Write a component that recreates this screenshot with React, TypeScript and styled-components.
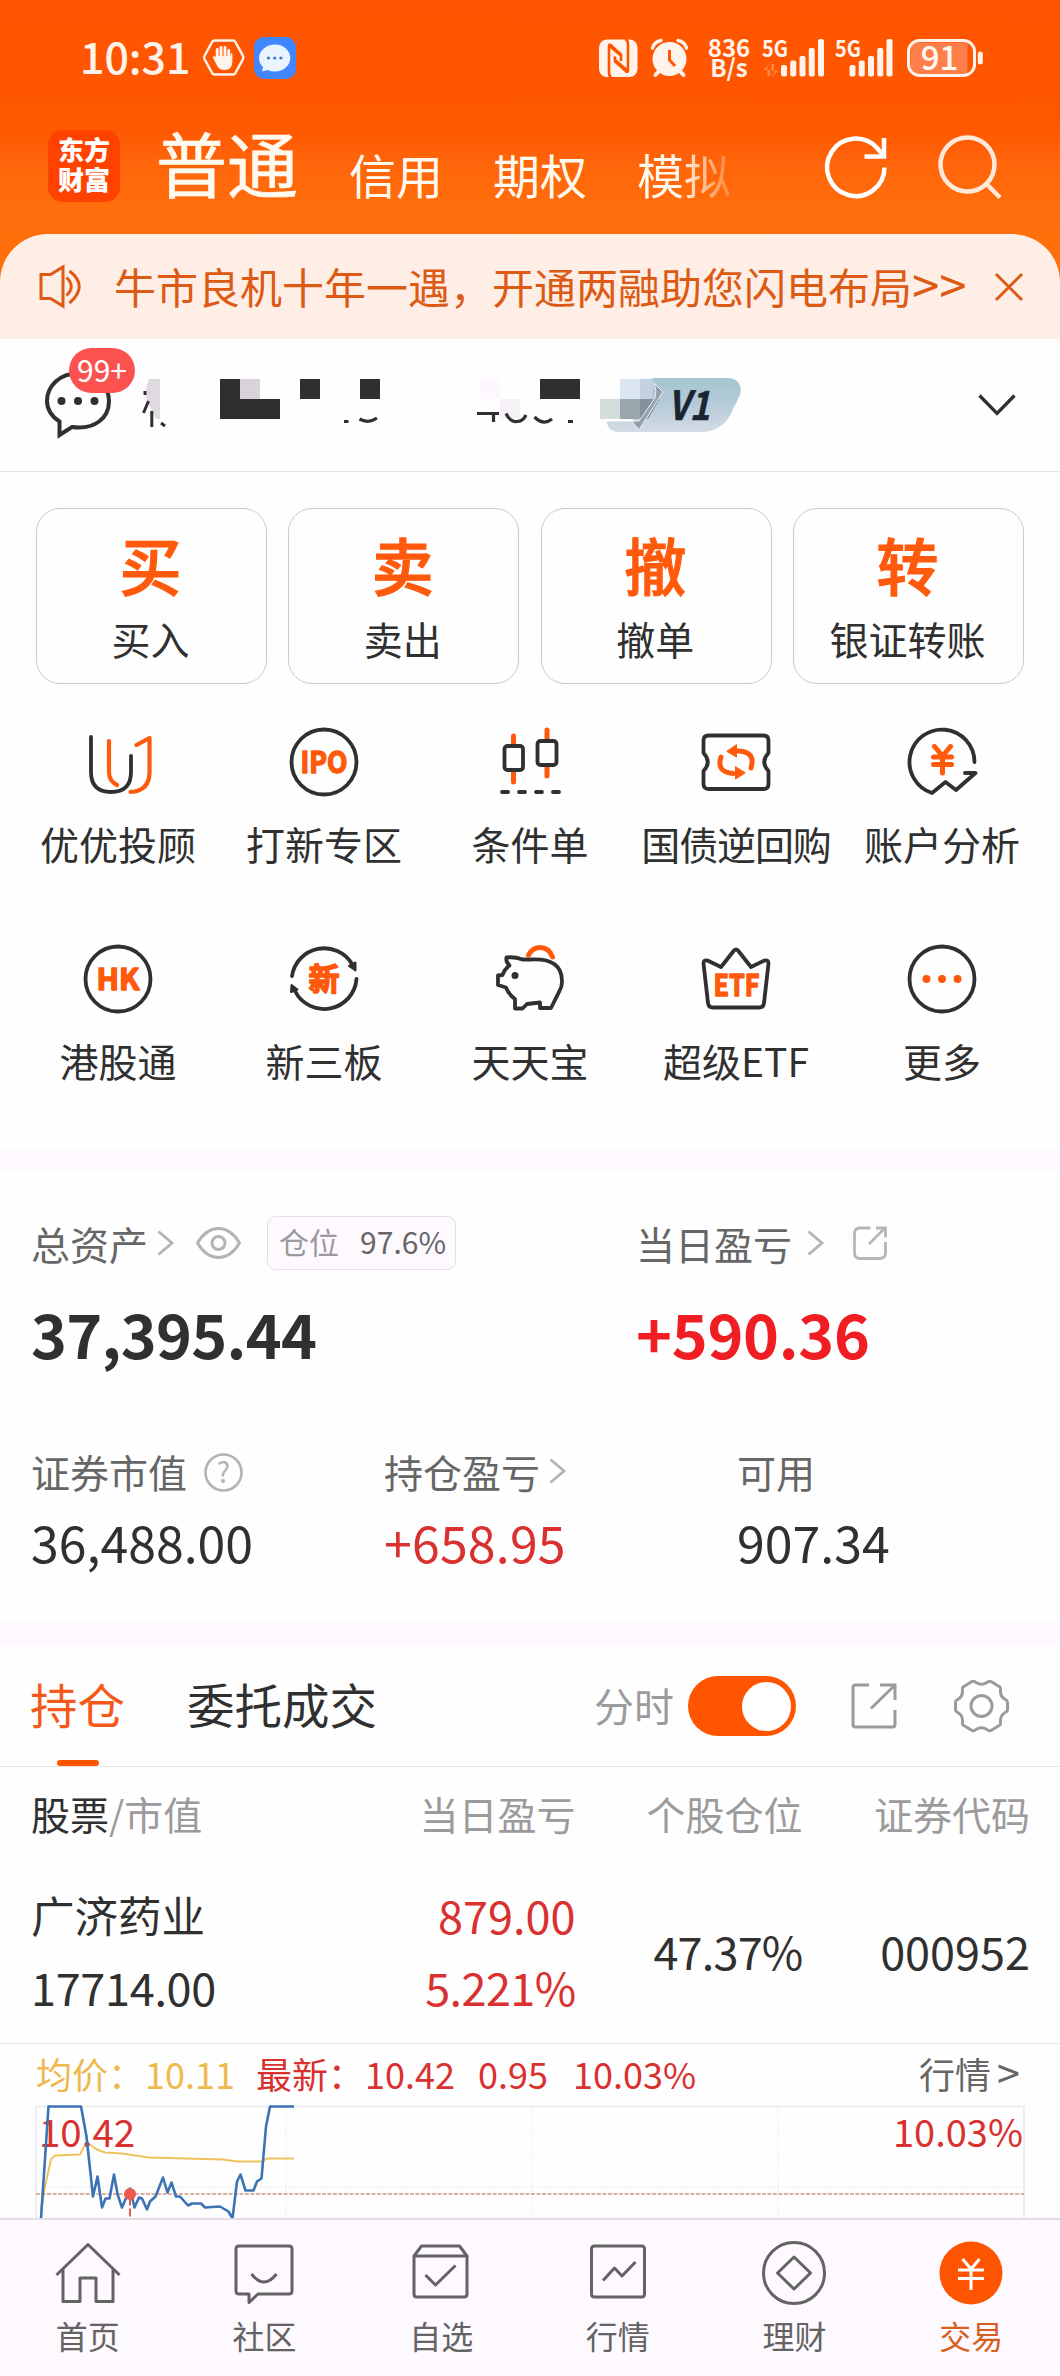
import React from 'react';
import styled, { createGlobalStyle } from 'styled-components';

const ORANGE = '#ff5500';
const INK = '#303030';
const GREY = '#666666';
const LIGHT = '#9c9a9c';
const RED = '#d93030';
const BAND = '#fdf9fe';

const GlobalStyle = createGlobalStyle`
  * { box-sizing: border-box; }
  html, body { margin: 0; padding: 0; background: #fefefe; }
  body {
    font-family: "Noto Sans CJK SC", "Noto Sans", sans-serif;
    color: ${INK};
    width: 1060px;
    overflow: hidden;
  }
  svg { display: block; flex: none; overflow: visible; }
`;

const Screen = styled.div`
  width: 1060px;
  height: 2376px;
  display: flex;
  flex-direction: column;
  overflow: hidden;
  background: #fefefe;
`;

const Text = styled.span<{ $size: number; $color?: string; $weight?: number; $ml?: number; $track?: number }>`
  font-size: ${(p) => p.$size}px;
  line-height: 1.2;
  color: ${(p) => p.$color ?? INK};
  font-weight: ${(p) => p.$weight ?? 400};
  margin-left: ${(p) => p.$ml ?? 0}px;
  letter-spacing: ${(p) => p.$track ?? 0}px;
  white-space: nowrap;
`;

const Push = styled.div<{ $ml: number }>`
  flex: none;
  margin-left: ${(p) => p.$ml}px;
`;

/* ---------- header ---------- */

const Header = styled.header`
  height: 339px;
  background: linear-gradient(180deg, #ff5500 0, #ff5600 122px, #ff640a 160px, #ff6d0c 205px, #ff6f0c 234px);
`;

const StatusBar = styled.div`
  height: 116px;
  display: flex;
  align-items: center;
  padding-left: 80px;
`;

const Clock = styled.span`
  width: 123px;
  font-size: 43px;
  line-height: 50px;
  padding-bottom: 7px;
  font-weight: 500;
  letter-spacing: -0.1px;
  color: #fff3ec;
`;

const Speed = styled.div`
  margin-left: 17px;
  width: 46px;
  display: flex;
  flex-direction: column;
  align-items: center;
  font-size: 24px;
  line-height: 20px;
  font-weight: 700;
  color: #fff3ec;
  padding-bottom: 3px;
`;

const NavBar = styled.div`
  height: 118px;
  padding: 0 58px 18px 48px;
  display: flex;
  align-items: center;
`;

const Logo = styled.div`
  width: 72px;
  height: 72px;
  flex: none;
  border-radius: 15px;
  background: #ff4200;
  color: #fff;
  font-size: 26px;
  line-height: 30px;
  font-weight: 900;
  text-align: center;
  padding-top: 4px;
`;

const NavTitle = styled.span`
  margin-left: 36px;
  padding-bottom: 10px;
  font-size: 71px;
  line-height: 80px;
  color: #fffaf0;
  -webkit-text-stroke: 0.7px #fffaf0;
  white-space: nowrap;
`;

const NavItem = styled.span<{ $ml: number; $fade?: boolean }>`
  font-size: 47px;
  line-height: 60px;
  margin-left: ${(p) => p.$ml}px;
  padding-top: 15px;
  color: #fffaf0;
  white-space: nowrap;
  ${(p) =>
    p.$fade
      ? `background: linear-gradient(90deg, #fffaf0 45%, rgba(255,250,240,0.1) 105%);
         -webkit-background-clip: text; background-clip: text; color: transparent;`
      : ''}
`;

const NavIcons = styled.div`
  margin-left: auto;
  display: flex;
  align-items: center;
  gap: 51px;
`;

const Notice = styled.div`
  height: 105px;
  border-radius: 48px 48px 0 0;
  background: #ffeee6;
  display: flex;
  align-items: center;
  padding: 0 37px 0 39px;
  justify-content: space-between;
`;

const NoticeText = styled.span`
  font-size: 42px;
  line-height: 60px;
  width: 852px;
  margin-left: 3px;
  padding-bottom: 2px;
  color: #dd5a14;
  white-space: nowrap;
`;

const Chevrons = styled.span`
  font-size: 49px;
  line-height: 40px;
`;

/* ---------- account ---------- */

const Account = styled.section`
  height: 133px;
  border-bottom: 1px solid #e4e4e4;
  display: flex;
  align-items: center;
  padding: 0 44px;
`;

const Messages = styled.div`
  position: relative;
  width: 68px;
  height: 68px;
`;

const Count = styled.span`
  position: absolute;
  left: 25px;
  top: -23px;
  width: 66px;
  height: 45px;
  border-radius: 23px;
  background: #fb5250;
  color: #fff;
  font-size: 30px;
  line-height: 42px;
  text-align: center;
`;

/* ---------- actions ---------- */

const Cards = styled.div`
  display: grid;
  grid-template-columns: repeat(4, 1fr);
  gap: 21.6px;
  padding: 36px 36px 0;
`;

const Card = styled.button`
  height: 176px;
  border: 1px solid #cbcbcb;
  border-radius: 24px;
  background: #fefefe;
  font-family: inherit;
  padding: 18px 2px 0 0;
  display: flex;
  flex-direction: column;
  align-items: center;
`;

const CardGlyph = styled.span`
  font-size: 62px;
  line-height: 74px;
  font-weight: 500;
  color: #ff5a0c;
  -webkit-text-stroke: 1.2px #ff5a0c;
`;

const CardLabel = styled.span`
  font-size: 39px;
  line-height: 74px;
  color: ${INK};
`;

const Shortcuts = styled.div`
  display: grid;
  grid-template-columns: repeat(5, 206px);
  grid-auto-rows: 217px;
  padding: 43px 15px 0;
  height: 464px;
`;

const Shortcut = styled.div`
  display: flex;
  flex-direction: column;
  align-items: center;
  gap: 23px;
`;

const Band = styled.div<{ $h: number }>`
  height: ${(p) => p.$h}px;
  flex: none;
  background: ${BAND};
`;

/* ---------- assets ---------- */

const Assets = styled.section`
  height: 449px;
  padding: 45px 0 0 31px;
`;

const Totals = styled.div`
  display: grid;
  grid-template-columns: 605px 1fr;
  height: 151px;
`;

const Details = styled.div`
  display: grid;
  grid-template-columns: 353px 353px 1fr;
  margin-top: 78px;
`;

const Line = styled.div<{ $h: number; $mt?: number }>`
  height: ${(p) => p.$h}px;
  margin-top: ${(p) => p.$mt ?? 0}px;
  display: flex;
  align-items: center;
`;

const Position = styled.div`
  margin-left: 26px;
  width: 189px;
  height: 54px;
  border: 1px solid #e3dfe4;
  border-radius: 9px;
  background: ${BAND};
  display: flex;
  align-items: center;
  padding: 0 9px 4px 11px;
  justify-content: space-between;
`;

/* ---------- holdings ---------- */

const Tabs = styled.div`
  height: 121px;
  border-bottom: 1px solid #e4e4e4;
  display: flex;
  align-items: center;
  padding-left: 30px;
`;

const Tab = styled.div<{ $active?: boolean }>`
  position: relative;
  height: 120px;
  display: flex;
  align-items: center;
  padding-bottom: 6px;
  font-size: 47.5px;
  color: ${(p) => (p.$active ? '#f5591a' : INK)};
  margin-right: 62px;
  ${(p) =>
    p.$active
      ? `&::after { content: ''; position: absolute; left: 27px; bottom: 0; width: 42px; height: 6px; border-radius: 3px; background: ${ORANGE}; }`
      : ''}
`;

const ToggleLabel = styled.span`
  margin-left: 155px;
  padding-bottom: 3px;
  font-size: 40px;
  line-height: 48px;
  color: ${LIGHT};
`;

const Toggle = styled.div`
  width: 108px;
  height: 60px;
  border-radius: 30px;
  background: ${ORANGE};
  margin-left: 14px;
  display: flex;
  align-items: center;
  justify-content: flex-end;
  padding-right: 5px;
`;

const Knob = styled.div`
  width: 49px;
  height: 49px;
  border-radius: 50%;
  background: #fff;
`;

const HoldingGrid = styled.div<{ $h: number }>`
  height: ${(p) => p.$h}px;
  display: grid;
  grid-template-columns: 300px 244.5px 227px 227.5px;
  align-items: center;
  padding-left: 31px;
`;

const HoldingCell = styled.div<{ $right?: boolean }>`
  display: flex;
  flex-direction: column;
  align-items: ${(p) => (p.$right ? 'flex-end' : 'flex-start')};
`;

const Stack = styled.div`
  height: 72px;
  display: flex;
  align-items: center;
`;

const QuoteRow = styled.div`
  height: 60px;
  border-top: 1px solid #e8e8e8;
  display: flex;
  align-items: center;
  padding: 0 36px 2px;
  flex: none;
`;

const QuoteText = styled.span<{ $w: number; $color: string }>`
  width: ${(p) => p.$w}px;
  color: ${(p) => p.$color};
  font-size: 36px;
  line-height: 50px;
  white-space: nowrap;
`;

const More = styled.span`
  font-size: 41px;
  line-height: 40px;
  margin-left: -2px;
`;

const ChartBox = styled.div`
  height: 115px;
  overflow: hidden;
  flex: none;
`;

/* ---------- bottom bar ---------- */

const BottomBar = styled.nav`
  height: 157px;
  flex: none;
  border-top: 2px solid #e2dfe3;
  background: ${BAND};
  display: grid;
  grid-template-columns: repeat(6, 1fr);
  padding-top: 20px;
`;

const BottomItem = styled.div`
  display: flex;
  flex-direction: column;
  align-items: center;
  gap: 10px;
  padding-right: 1px;
`;

/* ---------- icons ---------- */

const HandIcon = () => (
  <svg width="42" height="40" viewBox="203 38 42 40" fill="none">
    <path d="M214.500 40.500h18.500q1.500 0 2.300 1.300l7.700 14q.8 1.700 0 3.400l-7.700 14q-.8 1.300-2.300 1.300h-18.500q-1.500 0-2.300-1.300l-7.700-14q-.8-1.700 0-3.400l7.700-14q.8-1.300 2.300-1.300z" stroke="#fff3ec" strokeWidth="2.400" />
    <path d="M217.200 60V49.500M221 58V47.500M225 58V47.500M228.800 60V50.500" stroke="#fff3ec" strokeWidth="2.900" strokeLinecap="round" />
    <path d="M215.800 56h14.400l1-2.500q1.300-1 1.200 1V61q0 9-8 9-5 0-7.500-4.500l-4-8q0-2 2.500-1l2 2.500z" fill="#fff3ec" />
  </svg>
);

const ChatAppIcon = () => (
  <svg width="42" height="42" viewBox="254 36.500 42 42">
    <rect x="254" y="36.500" width="42" height="42" rx="10" fill="#3f86ff" />
    <path d="M275 44c8.500 0 15.300 6 15.300 13.500S283.500 71 275 71q-4.200 0-7.500-1.500L262 71l1-4.500q-4-3.500-4-9C259 50 266.500 44 275 44z" fill="#e9f4ff" />
    <circle cx="268.500" cy="57.500" r="1.600" fill="#3f76c8" />
    <circle cx="274.700" cy="57.500" r="1.600" fill="#3f76c8" />
    <circle cx="280.900" cy="57.500" r="1.600" fill="#3f76c8" />
  </svg>
);

const NfcIcon = () => (
  <svg width="39" height="38" viewBox="598.500 39.500 39 38">
    <rect x="598.500" y="40" width="38.500" height="37.500" rx="8" fill="#fff3ec" />
    <path d="M611 78q-2.500-1-2.500-5V46.500q0-2 2-.8L620.500 55v6.500M624.500 39.500q3 1 3 5V71q0 2-2 .8L614.500 62V57" fill="none" stroke={ORANGE} strokeWidth="2.600" />
    <path d="M609 46.500l12 10M627 71l-12-10" stroke={ORANGE} strokeWidth="2.600" />
  </svg>
);

const AlarmIcon = () => (
  <svg width="38" height="40" viewBox="651 39 38 40" fill="none">
    <circle cx="669.500" cy="60" r="17" fill="#fff3ec" />
    <path d="M660 71l-4.500 5M679 71l4.500 5" stroke="#fff3ec" strokeWidth="4" strokeLinecap="round" />
    <path d="M652.500 49q2-6.500 8.500-7.500M686.500 49q-2-6.500-8.500-7.500" stroke="#fff3ec" strokeWidth="3.500" strokeLinecap="round" />
    <path d="M669.500 51v10l5.500 6" stroke={ORANGE} strokeWidth="3" />
  </svg>
);

const SignalText = styled.text`
  font-family: "Noto Sans CJK SC", sans-serif;
  font-size: 23px;
  font-weight: 700;
  fill: #fff3ec;
`;

const Signal = ({ first }: { first?: boolean }) => {
  const start = first ? 18 : 13.5;
  const tops = [26, 21.5, 17, 9, 0];
  return (
    <svg width={first ? 62 : 57} height="38" viewBox={first ? '0 0 62 38' : '0 0 57 38'}>
      <SignalText x="-1" y="18" textLength="26" lengthAdjust="spacingAndGlyphs">5G</SignalText>
      {tops.map((t, i) => (
        <rect key={t} x={start + i * 9.25} y={t} width="6" height={37.5 - t} rx="2" fill="#fff3ec" />
      ))}
      {first && (
        <path d="M4.500 26v11H7V26zM0 31l7-6v6zM8.500 25v11H11V25zM8.500 31.500h7l-6 6z" fill="#fff" opacity="0.300" />
      )}
    </svg>
  );
};

const BatteryText = styled.text`
  font-family: "Noto Sans CJK SC", sans-serif;
  font-size: 33px;
  font-weight: 500;
  fill: #fff8f4;
  text-anchor: middle;
`;

const Battery = () => (
  <svg width="77" height="38" viewBox="907 38.500 77 38">
    <path d="M919 42h48.500v31.500H919q-8.500 0-8.500-8.500V50.500q0-8.500 8.500-8.500z" fill="#ff7f4b" />
    <rect x="908.500" y="40" width="66" height="35" rx="11" fill="none" stroke="#fff3ec" strokeWidth="3" />
    <rect x="977.800" y="51" width="5" height="13" rx="2.500" fill="#fff3ec" />
    <BatteryText x="939.500" y="69.500">91</BatteryText>
  </svg>
);

const RefreshIcon = () => (
  <svg width="62" height="64" viewBox="825 134 62 64" fill="none" stroke="#fff" strokeWidth="4.500">
    <path d="M884.500 167.500a28.700 28.700 0 1 1-7.500-19.500l7 8" />
    <path d="M884 138v18.500h-19.500" />
  </svg>
);

const SearchIcon = () => (
  <svg width="64" height="64" viewBox="938 132.500 64 64" fill="none" stroke="#ffe9db" strokeWidth="4.500">
    <circle cx="967.500" cy="163" r="27" />
    <path d="M986 182l14 14" />
  </svg>
);

const SpeakerIcon = () => (
  <svg width="43" height="44" viewBox="39.500 264.500 43 44" fill="none" stroke="#dd5a14" strokeWidth="3">
    <path d="M41.500 274h9.500l12.500-7.500v39L51 298h-9.500z" />
    <path d="M67 277q9.500 9 0 18M70 270.500q19.500 15 0 32" />
  </svg>
);

const CloseIcon = () => (
  <svg width="28" height="28" viewBox="0 0 28 28" stroke="#dd5a14" strokeWidth="3">
    <path d="M1 1l26 26M27 1L1 27" />
  </svg>
);

const BubbleIcon = () => (
  <svg width="68" height="68" viewBox="44 371 68 68" fill="none">
    <path d="M78 373.500c18 0 31 12 31 27.500 0 17-14 29-37 26l-12.500 8V421.500C51 416 47 409 47 401c0-15.500 13-27.500 31-27.500z" stroke={INK} strokeWidth="4" />
    <circle cx="61.500" cy="401" r="4" fill={INK} />
    <circle cx="78" cy="401" r="4" fill={INK} />
    <circle cx="94.500" cy="401" r="4" fill={INK} />
  </svg>
);

const LevelText = styled.text`
  font-family: "Noto Sans CJK SC", sans-serif;
  font-size: 40px;
  font-weight: 700;
  font-style: italic;
  fill: #1b2532;
`;

const MaskedAccount = () => (
  <svg width="610" height="68" viewBox="140 371 610 68">
    <defs>
      <linearGradient id="level" x1="0" y1="0" x2="0" y2="1">
        <stop offset="0" stopColor="#a2c6d0" />
        <stop offset="0.500" stopColor="#b6cbd8" />
        <stop offset="1" stopColor="#d4dce5" />
      </linearGradient>
      <linearGradient id="silver" x1="0" y1="0" x2="1" y2="1">
        <stop offset="0" stopColor="#eef0f2" />
        <stop offset="0.500" stopColor="#8c98a3" />
        <stop offset="1" stopColor="#dfe4e8" />
      </linearGradient>
    </defs>
    <path d="M149 379h11v40h-3q-5-5-6-10-6-12-5-18 0-6 3-12z" fill="#dfdadf" />
    <path d="M148.500 401l-5 12M151.800 411v16M161 423l4 3M145 391v4" stroke={INK} strokeWidth="3" />
    <path d="M220 379h20v20h40v20h-60zM300 379h20v20h-20zM360 379h20v20h-20zM540 379h40v20h-40z" fill="#2f2f2f" />
    <path d="M240 379h20v20h-20z" fill="#d8d3d8" />
    <path d="M480 379h20v20h-20z" fill="#fdf8fe" />
    <path d="M500 399h20v20h-20z" fill="#f6f1f7" />
    <path d="M344 421.500h4.500M359.500 419q9 5 17.500-1M477 413.500h22M493.500 413v9M506 413.500q4 8.500 11 8 6 0 9-6.500M534.500 417q9 9 17.500 2M568 421.500h5" fill="none" stroke={INK} strokeWidth="3.200" />
    <path d="M652 378h76q14 1 12.500 15-1 4-7 15-9 24-33 24h-83q-10-1-11-11h26z" fill="url(#level)" />
    <path d="M620 379h20v20h-20z" fill="#dce6f0" />
    <path d="M640 379h13v20h-13z" fill="#c2d0df" />
    <path d="M600 399h20v20h-20z" fill="#d3deda" />
    <path d="M620 399h20v20h-20z" fill="#98a7ab" />
    <path d="M640 399h20l-12 20h-8z" fill="#85919b" />
    <path d="M606 419h26v2.500h-26z" fill="#fff" />
    <path d="M654 383l9 9-24 38-7-9h7l16-23 1-7z" fill="url(#silver)" stroke="#eef0f2" strokeWidth="1" />
    <LevelText x="668" y="420" stroke="#1b2532" strokeWidth="0.600" textLength="42" lengthAdjust="spacingAndGlyphs">V1</LevelText>
  </svg>
);

const DownIcon = () => (
  <svg width="38" height="22" viewBox="0 0 38 22" fill="none" stroke={INK} strokeWidth="3.300">
    <path d="M1.500 1.500L19 19.500 36.500 1.500" />
  </svg>
);

const OR = '#ff5a0c';

/* Shortcut drawings share a 70x70 canvas centred on 35,35. */
const IconLabel = styled.text<{ $size: number }>`
  font-family: "Noto Sans CJK SC", sans-serif;
  font-size: ${(p) => p.$size}px;
  font-weight: 700;
  fill: ${OR};
  stroke: ${OR};
  stroke-width: 1.5px;
  text-anchor: middle;
`;

const Draw = ({ children }: { children: React.ReactNode }) => (
  <svg width="70" height="70" viewBox="0 0 70 70" fill="none" stroke={INK} strokeWidth="3.800" strokeLinecap="round" strokeLinejoin="round">
    {children}
  </svg>
);

const AdvisorIcon = () => (
  <Draw>
    <path d="M8 10v35q0 20 20 20t20-20V29" />
    <path d="M26 14v31q0 9 8 13M53.500 18l13-7v34q0 19-19 20" stroke={OR} strokeWidth="4.200" />
  </Draw>
);
const IpoIcon = () => (
  <Draw>
    <circle cx="35" cy="35" r="32.500" />
    <IconLabel $size={30} x="35" y="46" textLength="47" lengthAdjust="spacingAndGlyphs">IPO</IconLabel>
  </Draw>
);
const CandleIcon = () => (
  <Draw>
    <path d="M18.500 9v46M52 3v46" stroke={OR} strokeWidth="5" />
    <rect x="9.500" y="19" width="18.500" height="24" rx="3" fill="#fefefe" />
    <rect x="42.500" y="14" width="19" height="24" rx="3" fill="#fefefe" />
    <path d="M7 65h6M24 65h6M41 65h6M58 65h6" />
  </Draw>
);
const BondIcon = () => (
  <Draw>
    <path d="M7.500 8.500h55q5 0 5 5v12.500q-8.500 9 0 18v13q0 5-5 5h-55q-5 0-5-5V44q8.500-9 0-18V13.500q0-5 5-5z" />
    <path d="M20 30q-5 15 12 16.500M50 41q5-16-12-17h-3" stroke={OR} strokeWidth="5" />
    <path d="M35.500 18v12l-9.500-5.500zM34.500 40v12l9.500-6z" fill={OR} stroke={OR} strokeWidth="1" />
  </Draw>
);
const AnalysisIcon = () => (
  <Draw>
    <path d="M67.500 35a32.500 32.500 0 1 0-42.500 31l13.500-11 10.500 8 19.500-17H58" />
    <path d="M27.500 19.500l8 9.500 8-9.500M35.500 29v17M26.500 30h18M26.500 37.500h18" stroke={OR} strokeWidth="5" />
  </Draw>
);
const HkIcon = () => (
  <Draw>
    <circle cx="35" cy="35" r="32.500" />
    <IconLabel $size={30} x="35" y="46" textLength="43" lengthAdjust="spacingAndGlyphs">HK</IconLabel>
  </Draw>
);
const NewBoardIcon = () => (
  <Draw>
    <path d="M3 32A32.500 32.500 0 0 1 63 20M67.500 35A32.500 32.500 0 0 1 6 47" />
    <path d="M66.500 18.500v8l-6.500-4.500zM2 48l.5-7 6 4.500z" fill={INK} strokeWidth="2" />
    <IconLabel $size={31} x="35" y="46" strokeWidth="0">新</IconLabel>
  </Draw>
);
const PiggyIcon = () => (
  <Draw>
    <path d="M33.500 11q4-7.500 11.500-7.500 9 0 12.500 9.500" stroke={OR} strokeWidth="5" />
    <path d="M11.500 13.500q8-1 16 2h8q32-2 31.500 22.500 0 5-3 10L56 64H45v-5.500l-13 1.500-4.500 4.500H20V55q-6-4-9-11.500L3 41V31.500l4.500-.5q2-6 7-9.500-4-4-3-8z" />
    <circle cx="20" cy="31.500" r="3.500" fill={INK} stroke="none" />
  </Draw>
);
const EtfIcon = () => (
  <Draw>
    <path d="M2.500 19.500q0-4 4-3L20 23 33 6.500q2-2 4 0L50 23l13.500-6.500q4-1 4 3L63 59q-.5 4.500-5 4.500H12Q7.500 63.500 7 59z" />
    <IconLabel $size={30} x="35.500" y="52" textLength="46" lengthAdjust="spacingAndGlyphs">ETF</IconLabel>
  </Draw>
);
const MoreIcon = () => (
  <Draw>
    <circle cx="35" cy="35" r="32.500" />
    <circle cx="19.500" cy="35" r="4" fill={OR} stroke="none" />
    <circle cx="35" cy="35" r="4" fill={OR} stroke="none" />
    <circle cx="50.500" cy="35" r="4" fill={OR} stroke="none" />
  </Draw>
);

const ArrowIcon = () => (
  <svg width="17" height="26" viewBox="0 0 17 26" fill="none" stroke="#b5b3b5" strokeWidth="2.800">
    <path d="M1.500 1.500l13.500 11.500L1.500 24.500" />
  </svg>
);

const EyeIcon = () => (
  <svg width="45" height="32" viewBox="0 0 45 32" fill="none" stroke="#b5b3b5" strokeWidth="3">
    <path d="M1.500 16Q10 1.500 22.500 1.500T43.500 16Q35 30.500 22.500 30.500T1.500 16z" />
    <circle cx="22.500" cy="16" r="6.500" />
  </svg>
);

const SmallShareIcon = () => (
  <svg width="34" height="35" viewBox="0 0 34 35" fill="none" stroke="#b9b4b9" strokeWidth="2.800">
    <path d="M17.500 2H7Q1.500 2 1.500 7.500v19Q1.500 32.500 7 32.500h19.500q6 0 6-6V16M16 18L31 3M23 2h9.500v9.500" />
  </svg>
);

const HelpText = styled.text`
  font-family: "Noto Sans CJK SC", sans-serif;
  font-size: 28px;
  fill: #b5b3b5;
  text-anchor: middle;
`;

const HelpIcon = () => (
  <svg width="39" height="39" viewBox="0 -1 39 39">
    <circle cx="19.500" cy="19.500" r="18" fill="none" stroke="#b5b3b5" strokeWidth="2.600" />
    <HelpText x="19.500" y="29.500">?</HelpText>
  </svg>
);

const ShareIcon = () => (
  <svg width="46" height="46" viewBox="0 0 46 46" fill="none" stroke={LIGHT} strokeWidth="3">
    <path d="M18 2H4.500Q2 2 2 4.500v37Q2 44 4.500 44h37q2.500 0 2.500-2.500V27M20 25.500L43 3M29 2h15v15" />
  </svg>
);

const GearIcon = () => (
  <svg width="55" height="54" viewBox="0 0 55 54" fill="none" stroke={LIGHT} strokeWidth="3" strokeLinejoin="round">
    <path d="M18 2.500Q20 1.500 22 3.500q5.500 3.500 11 0Q35 1.500 37 2.500L46 8q1 1 .5 3.500Q46 18 52 21q1.500.5 1.500 2.500v7q0 2-1.500 2.500-6 3-5.500 9.500.5 2.500-.5 3.500L37 51.500q-2 1-4-1-5.500-3.500-11 0-2 2-4 1L9 46q-1-1-.5-3.500Q9 36 3 33q-1.500-.5-1.500-2.500v-7q0-2 1.500-2.500 6-3 5.500-9.500Q8 9 9 8z" />
    <circle cx="27.500" cy="27" r="10.500" />
  </svg>
);

const Tool = ({ children }: { children: React.ReactNode }) => (
  <svg width="66" height="66" viewBox="0 0 66 66" fill="none" stroke="#636363" strokeWidth="3" strokeLinejoin="round">
    {children}
  </svg>
);

const HomeIcon = () => (
  <Tool>
    <path d="M1.500 35L33 4.500 64.500 35M8 29v32.500h17V38h16v23.500h17V29" />
  </Tool>
);
const CommunityIcon = () => (
  <Tool>
    <path d="M8 6h50q3 0 3 3v42q0 3-3 3H27l-9 8.500V54H8q-3 0-3-3V9q0-3 3-3zM20.500 34q12.500 16 25 0" />
  </Tool>
);
const WatchIcon = () => (
  <Tool>
    <path d="M6 16L13.500 6h38l7.500 10v38q0 3-3 3H9q-3 0-3-3zM6 16h53M17.500 35l10 10 20-19.500" />
  </Tool>
);
const QuoteIcon = () => (
  <Tool>
    <path d="M9.500 6h47q3 0 3 3v45q0 3-3 3h-47q-3 0-3-3V9q0-3 3-3zM18 40.500L29.500 28l7.500 8 13.500-14" />
  </Tool>
);
const WealthIcon = () => (
  <Tool>
    <circle cx="33" cy="33" r="30.500" />
    <path d="M33 17L49.500 33 33 49 16.500 33z" />
  </Tool>
);
const TradeIcon = () => (
  <Tool>
    <circle cx="33" cy="33" r="31.500" fill={ORANGE} stroke="none" />
    <path d="M24.500 19L33 29l8.500-10M33 29v21M20 30h26M20 38.500h26" stroke="#fff" />
  </Tool>
);

const cards = [
  ['买', '买入'],
  ['卖', '卖出'],
  ['撤', '撤单'],
  ['转', '银证转账'],
];

const shortcuts: [React.FC, string][] = [
  [AdvisorIcon, '优优投顾'],
  [IpoIcon, '打新专区'],
  [CandleIcon, '条件单'],
  [BondIcon, '国债逆回购'],
  [AnalysisIcon, '账户分析'],
  [HkIcon, '港股通'],
  [NewBoardIcon, '新三板'],
  [PiggyIcon, '天天宝'],
  [EtfIcon, '超级ETF'],
  [MoreIcon, '更多'],
];

const bottomItems: [React.FC, string, boolean][] = [
  [HomeIcon, '首页', false],
  [CommunityIcon, '社区', false],
  [WatchIcon, '自选', false],
  [QuoteIcon, '行情', false],
  [WealthIcon, '理财', false],
  [TradeIcon, '交易', true],
];

const pricePoints =
  '41,2219 48.5,2107 81,2107 86.5,2137 93,2197 97.5,2177 102,2208 105.5,2199 109.5,2199 114,2175 117.6,2195 122,2208 130,2189 134.5,2208 139,2198 142,2199 147,2210 150,2202 155.5,2197 163,2178 167.5,2193 171.5,2183 176,2197 180,2197 188,2206 192,2204 201,2204 205,2208 220,2207 228.5,2212 232.5,2219 237,2182 240.5,2175 245.5,2191 253.5,2191 257,2182 261.5,2179 266,2127 270,2107 294,2107';
const averagePoints =
  '41,2210 45,2187 51,2160 55,2156 80,2155 84,2147 90,2145 97,2150 105,2153 122,2154 149,2158 223,2160 237,2162 262,2162 267,2159 294,2159';

const AxisText = styled.text`
  font-family: "Noto Sans CJK SC", sans-serif;
  font-size: 38.5px;
  fill: ${RED};
`;

const Chart = () => (
  <svg width="1060" height="115" viewBox="0 2103.500 1060 115" fill="none">
    <path d="M36 2225V2107H1024V2225" stroke="#e9e9e9" strokeWidth="1.500" />
    <path d="M286 2107v112M532 2107v112M778 2107v112M36 2187.500H1024" stroke="#e4e4e4" strokeDasharray="1.500 2" />
    <polyline points={averagePoints} stroke="#f0c25e" strokeWidth="2" />
    <AxisText x="39" y="2147.500">10.42</AxisText>
    <AxisText x="1023" y="2147.500" textAnchor="end" textLength="130" lengthAdjust="spacingAndGlyphs">10.03%</AxisText>
    <path d="M36 2194.500H1024" stroke="#b5663f" strokeWidth="1.200" strokeDasharray="4 1.500" />
    <polyline points={pricePoints} stroke="#3b74b4" strokeWidth="2.600" strokeLinejoin="round" />
    <circle cx="130" cy="2194.500" r="6" fill="#ee5a4c" />
    <path d="M130 2200v6M130 2209v8" stroke="#ee5a4c" strokeWidth="2" />
  </svg>
);

export default function App() {
  return (
    <Screen>
      <GlobalStyle />
      <Header>
        <StatusBar>
          <Clock>10:31</Clock>
          <HandIcon />
          <Push $ml={9}><ChatAppIcon /></Push>
          <Push $ml={302.5}><NfcIcon /></Push>
          <Push $ml={13.5}><AlarmIcon /></Push>
          <Speed>
            <span>836</span>
            <span>B/s</span>
          </Speed>
          <Push $ml={11}><Signal first /></Push>
          <Push $ml={11}><Signal /></Push>
          <Push $ml={14}><Battery /></Push>
        </StatusBar>
        <NavBar>
          <Logo>东方<br />财富</Logo>
          <NavTitle>普通</NavTitle>
          <NavItem $ml={51}>信用</NavItem>
          <NavItem $ml={50}>期权</NavItem>
          <NavItem $ml={50} $fade>模拟</NavItem>
          <NavIcons>
            <RefreshIcon />
            <SearchIcon />
          </NavIcons>
        </NavBar>
        <Notice>
          <SpeakerIcon />
          <NoticeText>牛市良机十年一遇，开通两融助您闪电布局<Chevrons>&gt;&gt;</Chevrons></NoticeText>
          <CloseIcon />
        </Notice>
      </Header>

      <Account>
        <Messages>
          <BubbleIcon />
          <Count>99+</Count>
        </Messages>
        <Push $ml={28}><MaskedAccount /></Push>
        <Push $ml={228}><DownIcon /></Push>
      </Account>

      <Cards>
        {cards.map(([glyph, label]) => (
          <Card key={label}>
            <CardGlyph>{glyph}</CardGlyph>
            <CardLabel>{label}</CardLabel>
          </Card>
        ))}
      </Cards>

      <Shortcuts>
        {shortcuts.map(([Icon, label]) => (
          <Shortcut key={label}>
            <Icon />
            <Text $size={39} $track={label.length === 5 && label !== '超级ETF' ? -1.1 : 0}>{label}</Text>
          </Shortcut>
        ))}
      </Shortcuts>

      <Band $h={24} />

      <Assets>
        <Totals>
          <div>
            <Line $h={52}>
              <Text $size={39} $color={GREY}>总资产</Text>
              <Push $ml={9}><ArrowIcon /></Push>
              <Push $ml={22}><EyeIcon /></Push>
              <Position>
                <Text $size={30} $color={LIGHT}>仓位</Text>
                <Text $size={30} $color={GREY}>97.6%</Text>
              </Position>
            </Line>
            <Line $h={70} $mt={29}>
              <Text $size={61} $weight={700} $track={-0.7}>37,395.44</Text>
            </Line>
          </div>
          <div>
            <Line $h={52}>
              <Text $size={39} $color={GREY}>当日盈亏</Text>
              <Push $ml={15}><ArrowIcon /></Push>
              <Push $ml={29}><SmallShareIcon /></Push>
            </Line>
            <Line $h={70} $mt={29}>
              <Text $size={61} $weight={700} $track={-0.3} $color="#f01e23">+590.36</Text>
            </Line>
          </div>
        </Totals>
        <Details>
          <div>
            <Line $h={50}>
              <Text $size={39} $color={GREY}>证券市值</Text>
              <Push $ml={17}><HelpIcon /></Push>
            </Line>
            <Line $h={60} $mt={15}><Text $size={50}>36,488.00</Text></Line>
          </div>
          <div>
            <Line $h={50}>
              <Text $size={39} $color={GREY}>持仓盈亏</Text>
              <Push $ml={9}><ArrowIcon /></Push>
            </Line>
            <Line $h={60} $mt={15}><Text $size={50} $track={0.2} $color={RED}>+658.95</Text></Line>
          </div>
          <div>
            <Line $h={50}><Text $size={39} $color={GREY}>可用</Text></Line>
            <Line $h={60} $mt={15}><Text $size={50}>907.34</Text></Line>
          </div>
        </Details>
      </Assets>

      <Band $h={25} />

      <Tabs>
        <Tab $active>持仓</Tab>
        <Tab>委托成交</Tab>
        <ToggleLabel>分时</ToggleLabel>
        <Toggle><Knob /></Toggle>
        <Push $ml={55}><ShareIcon /></Push>
        <Push $ml={57}><GearIcon /></Push>
      </Tabs>

      <HoldingGrid $h={92}>
        <div>
          <Text $size={39}>股票</Text>
          <Text $size={39} $color={LIGHT}>/市值</Text>
        </div>
        <HoldingCell $right><Text $size={39} $color={LIGHT}>当日盈亏</Text></HoldingCell>
        <HoldingCell $right><Text $size={39} $color={LIGHT}>个股仓位</Text></HoldingCell>
        <HoldingCell $right><Text $size={39} $color={LIGHT}>证券代码</Text></HoldingCell>
      </HoldingGrid>
      <HoldingGrid $h={184}>
        <HoldingCell>
          <Stack><Text $size={43.5}>广济药业</Text></Stack>
          <Stack><Text $size={45} $track={-0.3}>17714.00</Text></Stack>
        </HoldingCell>
        <HoldingCell $right>
          <Stack><Text $size={45} $color={RED}>879.00</Text></Stack>
          <Stack><Text $size={45} $track={-0.6} $color={RED}>5.221%</Text></Stack>
        </HoldingCell>
        <HoldingCell $right><Text $size={45} $track={-0.8}>47.37%</Text></HoldingCell>
        <HoldingCell $right><Text $size={45}>000952</Text></HoldingCell>
      </HoldingGrid>

      <QuoteRow>
        <QuoteText $w={109} $color="#edb94e">均价：</QuoteText>
        <QuoteText $w={111} $color="#edb94e">10.11</QuoteText>
        <QuoteText $w={109} $color={RED}>最新：</QuoteText>
        <QuoteText $w={113} $color={RED}>10.42</QuoteText>
        <QuoteText $w={95} $color={RED}>0.95</QuoteText>
        <QuoteText $w={346} $color={RED}>10.03%</QuoteText>
        <QuoteText $w={105} $color={GREY}>行情 <More>&gt;</More></QuoteText>
      </QuoteRow>
      <ChartBox><Chart /></ChartBox>

      <BottomBar>
        {bottomItems.map(([Icon, label, active]) => (
          <BottomItem key={label}>
            <Icon />
            <Text $size={32} $color={active ? '#d95f1e' : '#636363'}>{label}</Text>
          </BottomItem>
        ))}
      </BottomBar>
    </Screen>
  );
}
